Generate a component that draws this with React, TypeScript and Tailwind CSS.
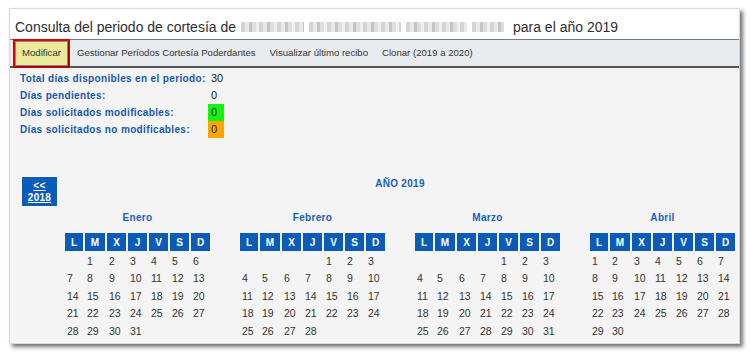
import React from "react"

type Month = { name: string; offset: number; days: number }

const months: Month[] = [
  { name: "Enero", offset: 1, days: 31 },
  { name: "Febrero", offset: 4, days: 28 },
  { name: "Marzo", offset: 4, days: 31 },
  { name: "Abril", offset: 0, days: 30 },
]

const weekDays = ["L", "M", "X", "J", "V", "S", "D"]

// build the week rows of a month (monday first)
function weeks(m: Month) {
  const cells: (number | null)[] = []
  for (let i = 0; i < m.offset; i++) cells.push(null)
  for (let d = 1; d <= m.days; d++) cells.push(d)
  while (cells.length % 7 !== 0) cells.push(null)
  const rows: (number | null)[][] = []
  for (let i = 0; i < cells.length; i += 7) rows.push(cells.slice(i, i + 7))
  return rows
}

function MonthTable({ month }: { month: Month }) {
  return (
    <div className="w-[175px] shrink-0 flex flex-col items-center">
      <div className="h-[12px] leading-[12px] mt-[5px] mb-[9px] text-[10px] font-bold tracking-[0.3px] text-[#1460c0]">
        {month.name}
      </div>
      <div className="grid grid-cols-[18px_20px_19px_19px_19px_19px_19px] gap-x-[2px]">
        {weekDays.map((d) => (
          <div
            key={d}
            className="h-[18px] mb-[1.5px] bg-[#0b5cb8] text-white text-[10px] font-bold flex items-center justify-center"
          >
            {d}
          </div>
        ))}
        {weeks(month).map((row, ri) =>
          row.map((day, ci) => (
            <div
              key={ri + "-" + ci}
              className="h-[17.5px] leading-[17.5px] pl-[2px] text-[10.5px] text-[#333] whitespace-nowrap"
            >
              {day ?? ""}
            </div>
          ))
        )}
      </div>
    </div>
  )
}

function Blur({ w }: { w: number }) {
  return (
    <span
      className="inline-block h-[10px] align-middle blur-[0.5px] bg-[repeating-linear-gradient(90deg,#d4d4d4_0_4px,#e9e9e9_4px_8px,#c4c4c4_8px_11px,#dedede_11px_15px,#efefef_15px_18px)]"
      style={{ width: w }}
    />
  )
}

export default function App() {
  return (
    <div className="w-[750px] h-[353px] bg-white overflow-hidden pt-[8px] pl-[9px] font-['Liberation_Sans',Arial,sans-serif]">
      <div className="w-[731px] h-[336px] border border-[#d9d9d9] bg-[#f4f4f4] shadow-[3px_3px_4px_rgba(0,0,0,0.55)] overflow-hidden flex flex-col">
        {/* title */}
        <div className="h-[30px] bg-white pt-[5px] pl-[5px] text-[14px] leading-[16px] text-[#2e2e2e] whitespace-nowrap flex items-center">
          <span>Consulta del periodo de cortesía de</span>
          <span className="flex items-center gap-[5px] ml-[5px] mr-[5px]">
            <Blur w={63} />
            <Blur w={92} />
            <Blur w={61} />
            <Blur w={32} />
          </span>
          <span>&nbsp;para el año 2019</span>
        </div>

        {/* toolbar */}
        <div className="h-[29px] shrink-0 border-t border-[#7a7a7a] border-b-2 border-b-[#555] bg-[#e9ecee] flex items-center text-[9.6px] text-[#333] whitespace-nowrap">
          <div className="relative z-10 ml-[3px] h-[29px] border-2 border-[#e00000] flex">
            <div className="flex-1 flex items-center px-[6px] bg-[#ebeb9d] border border-[#8a8a8a] shadow-[1px_1px_1px_rgba(0,0,0,0.35)] text-[#333]">
              Modificar
            </div>
          </div>
          <div className="px-[7px]">Gestionar Períodos Cortesía Poderdantes</div>
          <div className="px-[7px]">Visualizar último recibo</div>
          <div className="px-[7px]">Clonar (2019 a 2020)</div>
        </div>

        {/* totals */}
        <div className="pt-[2px] pl-[10px] text-[10px]">
          {[
            { label: "Total días disponibles en el periodo:", value: "30", bg: "" },
            { label: "Días pendientes:", value: "0", bg: "" },
            { label: "Días solicitados modificables:", value: "0", bg: "bg-[#11f511]" },
            { label: "Días solicitados no modificables:", value: "0", bg: "bg-[#ffa500]" },
          ].map((r) => (
            <div key={r.label} className="flex h-[17px] items-stretch">
              <div className="w-[188px] flex items-center font-bold tracking-[0.35px] text-[#1558b0] whitespace-nowrap">
                {r.label}
              </div>
              <div className={"w-[16px] flex items-center pl-[3px] text-[11px] text-[#222] " + r.bg}>{r.value}</div>
            </div>
          ))}
        </div>

        {/* calendar */}
        <div className="mt-[38px] pl-[11px]">
          <div className="flex items-start">
            <div className="w-[37px] h-[31px] shrink-0 border border-white bg-[#0b5cb8] flex flex-col items-center justify-center text-white text-[10px] font-bold leading-[12px] underline tracking-[0.3px]">
              <span>&lt;&lt;</span>
              <span>2018</span>
            </div>
            <div className="w-[684px] shrink-0 pt-[2px] text-center text-[10px] leading-[12px] font-bold tracking-[0.3px] text-[#1460c0]">
              AÑO 2019
            </div>
          </div>
          <div className="flex ml-[29px]">
            {months.map((m) => (
              <MonthTable key={m.name} month={m} />
            ))}
          </div>
        </div>
      </div>
    </div>
  )
}
